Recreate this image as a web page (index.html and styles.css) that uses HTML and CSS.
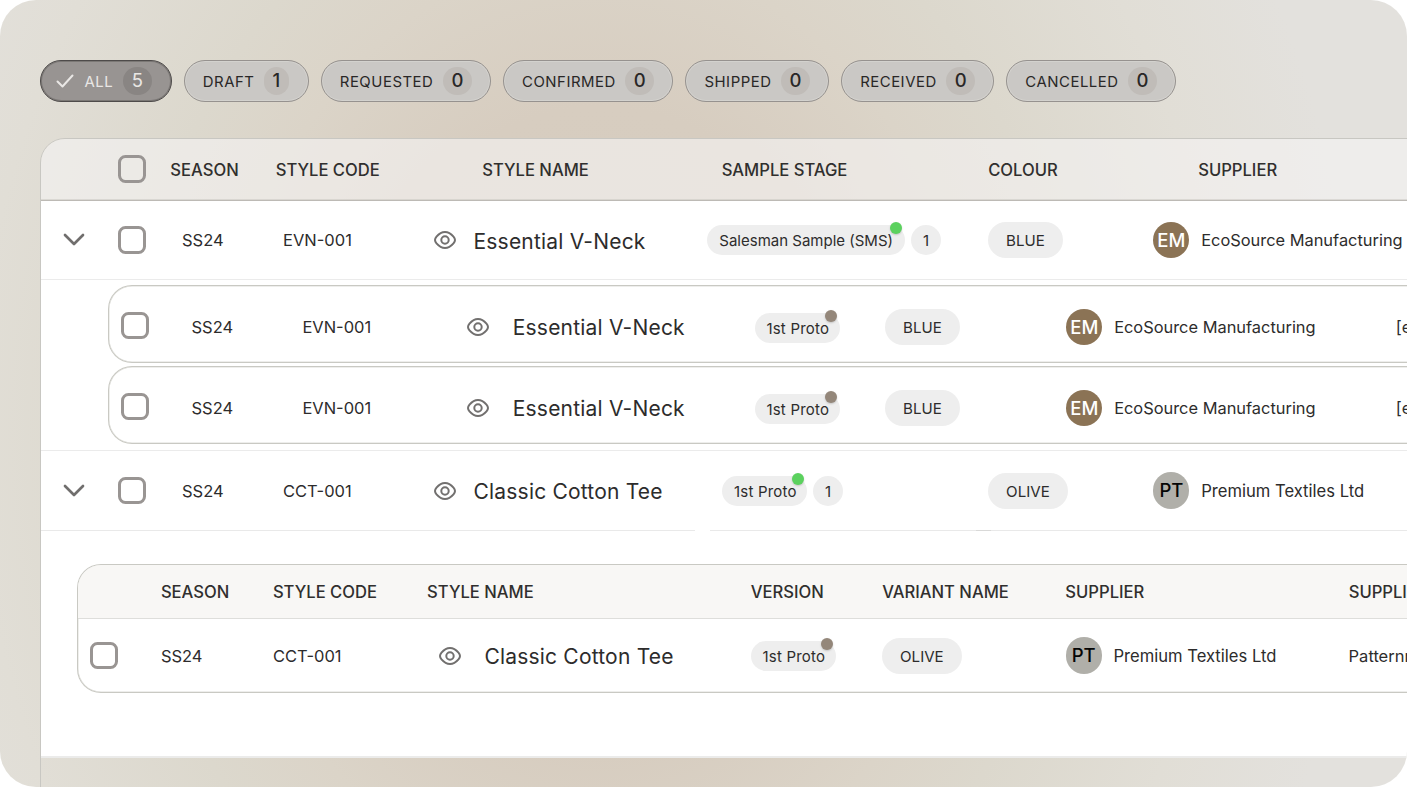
FILE: index.html
```html
<!DOCTYPE html>
<html lang="en">
<head>
<meta charset="utf-8">
<title>Samples</title>
<link rel="stylesheet" href="styles.css">
</head>
<body>
<svg class="defs" width="0" height="0" aria-hidden="true">
  <symbol id="eye" viewBox="0 0 24 24">
    <path d="M2 12c0-1.300.500-2.200 1.500-3.400C5.500 6.300 8.400 4 12 4s6.500 2.300 8.500 4.600c1 1.200 1.500 2.100 1.500 3.400s-.5 2.200-1.500 3.400C18.500 17.700 15.600 20 12 20s-6.500-2.300-8.500-4.600C2.500 14.200 2 13.300 2 12z" fill="none" stroke="currentColor" stroke-width="2"/>
    <circle cx="12" cy="12" r="3.700" fill="none" stroke="currentColor" stroke-width="2"/>
  </symbol>
  <symbol id="chevron" viewBox="0 0 22 14">
    <path d="M2 2l9 9 9-9" fill="none" stroke="currentColor" stroke-width="2.700" stroke-linecap="round" stroke-linejoin="round"/>
  </symbol>
</svg>
<main class="frame">
  <nav class="filters">
    <button class="filter filter-active"><svg class="tick" viewBox="0 0 18 14"><path d="M1.500 7.500l5 5L16.500 1.500" fill="none" stroke="currentColor" stroke-width="2" stroke-linecap="round" stroke-linejoin="round"/></svg><span class="label">ALL</span><span class="num">5</span></button>
    <button class="filter filter-draft"><span class="label">DRAFT</span><span class="num">1</span></button>
    <button class="filter"><span class="label">REQUESTED</span><span class="num">0</span></button>
    <button class="filter"><span class="label">CONFIRMED</span><span class="num">0</span></button>
    <button class="filter"><span class="label">SHIPPED</span><span class="num">0</span></button>
    <button class="filter"><span class="label">RECEIVED</span><span class="num">0</span></button>
    <button class="filter"><span class="label">CANCELLED</span><span class="num">0</span></button>
  </nav>

  <section class="table">
    <div class="head main-head">
      <span></span><span class="check"></span><span>SEASON</span><span>STYLE CODE</span><span>STYLE NAME</span><span>SAMPLE STAGE</span><span>COLOUR</span><span>SUPPLIER</span>
    </div>
    <div class="body">
      <div class="row main-row">
        <svg class="chevron"><use href="#chevron"/></svg><span class="check"></span><span>SS24</span><span>EVN-001</span>
        <svg class="eye"><use href="#eye"/></svg><span class="name">Essential V-Neck</span>
        <span class="stage"><span class="tag">Salesman Sample (SMS)<i class="dot dot-green"></i></span><span class="count">1</span></span>
        <span class="pill">BLUE</span>
        <span class="supplier"><b class="avatar avatar-em">EM</b>EcoSource Manufacturing</span>
      </div>
      <div class="children">
        <div class="card child-row">
          <span class="check"></span><span>SS24</span><span>EVN-001</span><svg class="eye"><use href="#eye"/></svg><span class="name">Essential V-Neck</span>
          <span class="stage"><span class="tag tag-proto">1st Proto<i class="dot dot-brown"></i></span></span>
          <span class="pill">BLUE</span>
          <span class="supplier"><b class="avatar avatar-em">EM</b>EcoSource Manufacturing</span><span>[e</span>
        </div>
        <div class="card child-row">
          <span class="check"></span><span>SS24</span><span>EVN-001</span><svg class="eye"><use href="#eye"/></svg><span class="name">Essential V-Neck</span>
          <span class="stage"><span class="tag tag-proto">1st Proto<i class="dot dot-brown"></i></span></span>
          <span class="pill">BLUE</span>
          <span class="supplier"><b class="avatar avatar-em">EM</b>EcoSource Manufacturing</span><span>[e</span>
        </div>
      </div>
      <div class="row main-row row-second">
        <svg class="chevron"><use href="#chevron"/></svg><span class="check"></span><span>SS24</span><span>CCT-001</span>
        <svg class="eye"><use href="#eye"/></svg><span class="name">Classic Cotton Tee</span>
        <span class="stage stage-inset"><span class="tag tag-proto">1st Proto<i class="dot dot-green"></i></span><span class="count">1</span></span>
        <span class="pill">OLIVE</span>
        <span class="supplier supplier-premium"><b class="avatar avatar-pt">PT</b>Premium Textiles Ltd</span>
      </div>
      <div class="divider"><i class="line line-a"></i><i class="line line-b"></i><i class="line line-dark"></i><i class="line line-c"></i></div>
      <div class="card nested">
        <div class="head nested-head">
          <span></span><span>SEASON</span><span>STYLE CODE</span><span>STYLE NAME</span><span>VERSION</span><span>VARIANT NAME</span><span>SUPPLIER</span><span>SUPPLIER</span>
        </div>
        <div class="nested-row">
          <span class="check"></span><span>SS24</span><span>CCT-001</span><svg class="eye"><use href="#eye"/></svg><span class="name">Classic Cotton Tee</span>
          <span class="stage"><span class="tag tag-proto">1st Proto<i class="dot dot-brown"></i></span></span>
          <span class="pill">OLIVE</span>
          <span class="supplier supplier-premium"><b class="avatar avatar-pt">PT</b>Premium Textiles Ltd</span><span>Patternm</span>
        </div>
      </div>
    </div>
  </section>
</main>
</body>
</html>
```

FILE: styles.css
```css
* { box-sizing: border-box; }

body {
  margin: 0;
  background: #fff;
  color: #2d2c2c;
  font-family: Inter, "Liberation Sans", sans-serif;
  font-size: 16.5px;
  font-weight: 400;
  line-height: 20px;
  white-space: nowrap;
  overflow: hidden;
}

.defs { display: block; }

.frame {
  width: 1407px;
  height: 787px;
  padding: 60px 0 0 40px;
  border-radius: 36px;
  overflow: hidden;
  background:
    radial-gradient(ellipse 760px 950px at 600px 430px, #d5cbbd 0, #d7cdc0 34%, #dbd4c8 50%, #dcd8cd 62%, #e1ded6 82%, #e3e1dd 100%);
}

/* Status filters */
.filters {
  display: flex;
  gap: 12px;
  height: 42px;
}

.filter {
  display: flex;
  align-items: center;
  gap: 9.5px;
  margin: 0;
  padding: 0 18.200px 0 18px;
  border: 1px solid #96928f;
  border-radius: 21px;
  background: #cac8c5;
  color: #292727;
  font: 400 14.900px/28px Inter, "Liberation Sans", sans-serif;
  letter-spacing: .53px;
  box-shadow: inset 0 0 0 1px rgba(215, 213, 210, .7);
}

.filter .label { padding-top: 1px; }

.num {
  height: 28px;
  padding: 0 8.500px;
  border-radius: 14px;
  background: #c0bcb8;
  font-weight: 500;
  font-size: 18.500px;
  line-height: 27px;
  letter-spacing: 0;
}

.filter-draft { padding-right: 19.200px; }

.filter-active {
  padding-left: 15px;
  padding-right: 18.800px;
  border-color: #4e4b4a;
  background: #989492;
  color: #e9e7e5;
  box-shadow: inset 0 0 0 1px rgba(80, 77, 76, .4);
}

.filter-active .num {
  padding: 0 9px;
  background: #898583;
  font-weight: 400;
}

.tick { width: 18px; height: 14px; margin-right: 1px; }

/* Sample table */
.table {
  width: 1440px;
  height: 660px;
  margin-top: 36px;
  border: 1px solid #c8c7c2;
  border-radius: 25px 0 0 0;
  overflow: hidden;
}

.head {
  display: grid;
  align-items: center;
  color: #302f2e;
  font-weight: 500;
  font-size: 16.600px;
}

.main-head {
  grid-template-columns: 77px 52.300px 105.400px 206.500px 239.500px 266.500px 210px 200px;
  height: 62px;
  border-bottom: 1px solid #bdbab5;
  background: rgba(245, 244, 243, .62);
  box-shadow: inset 0 -1px 0 rgba(195, 192, 186, .45);
}

.body {
  height: 557px;
  border-bottom: 2px solid #ebebea;
  background: #fff;
}

.row, .child-row, .nested-row {
  display: grid;
  align-items: center;
}

.main-row {
  grid-template-columns: 77px 64px 101px 151px 39.500px 233.800px 281px 165px 300px;
  height: 79px;
  border-bottom: 1px solid #ebebeb;
}

.row-second { border-bottom: 0; }

.check {
  width: 27.500px;
  height: 27.500px;
  border: 3px solid #999593;
  border-radius: 7.500px;
}

.main-head .check { margin-top: -1px; }

.chevron {
  width: 22px;
  height: 14px;
  margin-left: 21.500px;
  color: #706e6d;
}

.eye {
  width: 24px;
  height: 24px;
  margin-left: -1px;
  color: #72706f;
}

.name {
  padding-top: 3px;
  font-size: 21px;
  line-height: 26px;
  letter-spacing: .2px;
}

.stage {
  display: flex;
  gap: 6px;
}

.stage-inset { padding-left: 15px; }

.tag, .count {
  position: relative;
  height: 30px;
  border-radius: 15px;
  background: #eee;
  font-size: 15px;
  line-height: 31px;
}

.tag { padding: 0 12px; }
.tag-proto { padding: 0 10.500px 0 11.700px; letter-spacing: .2px; }

.count {
  width: 30px;
  text-align: center;
}

.dot {
  position: absolute;
  top: -3px;
  right: 3px;
  width: 12px;
  height: 12px;
  border-radius: 50%;
  box-shadow: 0 1px 2px rgba(0, 0, 0, .18);
}

.dot-green { background: #5bd15e; }
.dot-brown { background: #94877a; }

.pill {
  justify-self: start;
  height: 36px;
  padding: 0 17.800px;
  border-radius: 18px;
  background: #eee;
  font-size: 15.100px;
  line-height: 37px;
}

.supplier {
  display: flex;
  align-items: center;
  gap: 11.700px;
  font-size: 16.400px;
}

.supplier-premium { font-size: 16.600px; }

.avatar {
  width: 36.200px;
  height: 36.200px;
  border-radius: 50%;
  font-weight: 500;
  font-size: 18.500px;
  line-height: 36.500px;
  text-align: center;
}

.avatar-em { background: #8b7355; color: #fff; }
.avatar-pt { background: #b0afa9; color: #050505; }

/* Expanded child rows */
.children {
  display: grid;
  gap: 3.500px;
  height: 171px;
  padding: 5px 0 6.500px 67px;
  border-bottom: 1px solid #ebebeb;
}

.card {
  border: 1px solid #c9c9c3;
  border-right: 0;
  border-radius: 24px 0 0 24px;
  box-shadow: inset 0 0 0 .5px #deded9;
}

.child-row {
  grid-template-columns: 70.200px 110.900px 164.400px 46px 242px 130.500px 181px 329.600px 40px;
  height: 77.500px;
  padding: 6px 0 0 12.300px;
}

.child-row .check { margin-top: -3px; }
.child-row .stage { margin-top: 3px; }

.divider {
  display: grid;
  grid-template-columns: 654px 15px 266px 15px 1fr;
  height: 1px;
}

.line { height: 1px; background: #e9e9e9; }
.line-b { grid-column: 3; }
.line-dark { background: #d9d9d8; }

.nested {
  height: 128.500px;
  margin: 33px 0 0 36px;
  overflow: hidden;
}

.nested-head {
  grid-template-columns: 82.900px 112px 154.200px 323.600px 131.500px 183.200px 283.300px 100px;
  height: 54px;
  border-bottom: 1px solid #dededb;
  background: #f8f7f5;
}

.nested-row {
  grid-template-columns: 70.900px 112px 166px 45.500px 266.400px 131.500px 183.300px 283px 100px;
  height: 73px;
  padding-left: 12px;
}
```
